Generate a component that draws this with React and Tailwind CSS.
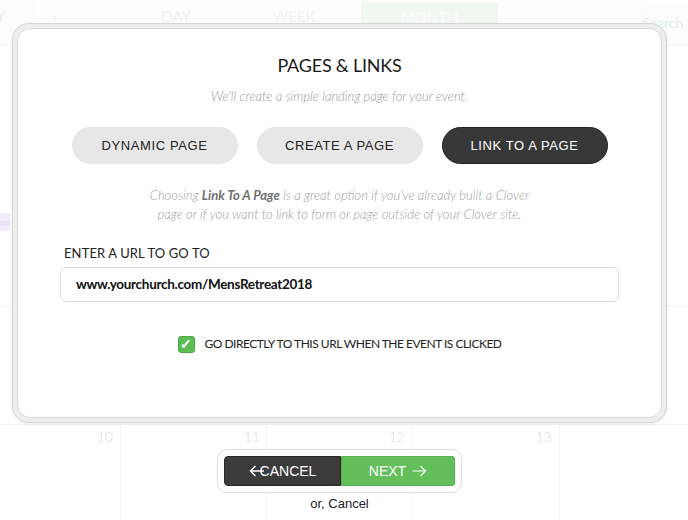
import React from "react";

function ArrowLeft() {
  return (
    <svg width="16" height="12" viewBox="0 0 16 12" className="shrink-0">
      <path d="M15 6H1.5M6.5 1L1.5 6l5 5" fill="none" stroke="white" strokeWidth="1.4" />
    </svg>
  );
}
function ArrowRight() {
  return (
    <svg width="15" height="12" viewBox="0 0 15 12" className="shrink-0">
      <path d="M0.5 6H13.5M8.5 1l5 5-5 5" fill="none" stroke="white" strokeWidth="1.2" />
    </svg>
  );
}

export default function App() {
  const lato = { fontFamily: "Lato, 'Open Sans', sans-serif" };
  const arial = { fontFamily: "'Liberation Sans', Arial, sans-serif" };
  return (
    <div className="relative w-[688px] h-[520px] overflow-hidden bg-white" style={lato}>
      {/* background calendar */}
      <div className="flex flex-col h-full">
        <div className="flex h-[45px] items-start border-b border-[#f2f2f2] bg-[#fdfefd] text-[15px] text-[#ebf4eb]">
          <div className="w-[40px] h-[33px] flex items-center bg-[#fbfcfb] -ml-[4px]">Y</div>
          <div className="w-[32px] h-[33px] ml-[2px] flex items-center justify-center text-[#e8f2e8]">›</div>
          <div className="w-[118px] h-[33px] ml-[47px] flex items-center justify-center bg-[#fcfdfc]">DAY</div>
          <div className="w-[118px] h-[33px] flex items-center justify-center">WEEK</div>
          <div className="w-[137px] h-[31px] ml-[8px] mt-[2px] flex items-center justify-center bg-[#f0f8f0] text-[#fafdfa]">MONTH</div>
          <div className="ml-auto w-[46px] h-[33px] mt-[6px] flex items-center bg-[#fbfdfb] text-[#e2f0e2] text-[14px]">Search</div>
        </div>
        <div className="grid grid-cols-[121px_146px_146px_147px_1fr] grid-rows-[262px_118px_1fr] flex-1">
          <div className="border-r border-b border-[#f4f4f4] pt-[168px]">
            <div className="h-[18px] w-[10px] bg-[#f3ebfc] text-[10px] text-[#e4d6f2] leading-[18px] overflow-hidden">om</div>
          </div>
          <div className="border-r border-b border-[#f4f4f4]" />
          <div className="border-r border-b border-[#f4f4f4]" />
          <div className="border-r border-b border-[#f4f4f4]" />
          <div className="border-b border-[#f4f4f4]" />
          <div className="border-r border-b border-[#f4f4f4]" />
          <div className="border-r border-b border-[#f4f4f4]" />
          <div className="border-r border-b border-[#f4f4f4]" />
          <div className="border-r border-b border-[#f4f4f4]" />
          <div className="border-b border-[#f4f4f4]" />
          <div className="border-r border-[#f4f4f4] text-right pr-[7px] pt-[1px] text-[14px] font-light text-[#dcdcdc]">10</div>
          <div className="border-r border-[#f4f4f4] text-right pr-[6px] pt-[1px] text-[14px] font-light text-[#dcdcdc]">11</div>
          <div className="border-r border-[#f4f4f4] text-right pr-[7px] pt-[1px] text-[14px] font-light text-[#dcdcdc]">12</div>
          <div className="border-r border-[#f4f4f4] text-right pr-[7px] pt-[1px] text-[14px] font-light text-[#dcdcdc]">13</div>
          <div />
        </div>
      </div>

      {/* modal */}
      <div className="absolute left-[12px] top-[23px] w-[655px] h-[400px] rounded-[17px] border border-[#d6d6d6] bg-[#eeeeee] p-[4px] shadow-[0_1px_3px_rgba(0,0,0,0.08)]">
        <div className="h-full rounded-[13px] border border-[#d9d9d9] bg-white px-[42px] pt-[24px] flex flex-col items-center">
          <h1 className="text-[18px] leading-[24px] text-[#1a1a1a] tracking-[-0.2px]">PAGES &amp; LINKS</h1>
          <p className="mt-[10px] text-[13px] leading-[18px] italic font-light text-[#9a9a9a]">
            We'll create a simple landing page for your event.
          </p>
          <div className="mt-[22px] flex gap-[19px]" style={arial}>
            <div className="w-[166px] h-[37px] rounded-full bg-[#e7e7e7] flex items-center justify-center text-[13px] tracking-[0.6px] text-[#222]">DYNAMIC PAGE</div>
            <div className="w-[166px] h-[37px] rounded-full bg-[#e7e7e7] flex items-center justify-center text-[13px] tracking-[0.6px] text-[#222]">CREATE A PAGE</div>
            <div className="w-[166px] h-[37px] rounded-full bg-[#383838] border border-[#222] flex items-center justify-center text-[13px] tracking-[0.6px] text-white">LINK TO A PAGE</div>
          </div>
          <p className="mt-[22px] text-[13px] leading-[19px] italic font-light text-[#a0a0a0] text-center">
            Choosing <span className="font-bold text-[#707070]">Link To A Page</span> is a great option if you've already built a Clover
            <br />
            page or if you want to link to form or page outside of your Clover site.
          </p>
          <div className="self-stretch mt-[21px]">
            <div className="pl-[4px] text-[13px] leading-[17px] tracking-[0.1px] text-[#222]">ENTER A URL TO GO TO</div>
            <div className="mt-[5px] h-[35px] rounded-[6px] border border-[#dcdcdc] flex items-center pl-[15px] text-[13.5px] font-bold text-[#111] tracking-[-0.3px]">
              www.yourchurch.com/MensRetreat2018
            </div>
          </div>
          <div className="mt-[33px] flex items-center gap-[10px]">
            <div className="w-[17px] h-[17px] rounded-[3px] bg-[#5cbd55] border border-[#4aa845] flex items-center justify-center text-white text-[14px] font-bold leading-none">✓</div>
            <div className="text-[12px] tracking-[-0.5px] text-[#222]">GO DIRECTLY TO THIS URL WHEN THE EVENT IS CLICKED</div>
          </div>
        </div>
      </div>

      {/* bottom actions */}
      <div className="absolute left-[217px] top-[449px] flex flex-col items-center">
        <div className="w-[245px] h-[44px] rounded-[10px] border border-[#dedede] bg-white p-[6px] flex" style={arial}>
          <div className="w-[117px] h-full rounded-l-[4px] bg-[#3b3b3b] border border-[#2a2a2a] flex items-center justify-center text-white text-[14px]">
            <span className="relative z-10 -mr-[5px] flex"><ArrowLeft /></span>
            <span>CANCEL</span>
          </div>
          <div className="flex-1 h-full rounded-r-[3px] bg-[#62bf5a] border border-[#56b24f] flex items-center justify-center text-white text-[14px] gap-[6px]">
            <span>NEXT</span>
            <ArrowRight />
          </div>
        </div>
        <div className="mt-[1px] text-[13px] text-[#222]" style={arial}>or, Cancel</div>
      </div>
    </div>
  );
}
